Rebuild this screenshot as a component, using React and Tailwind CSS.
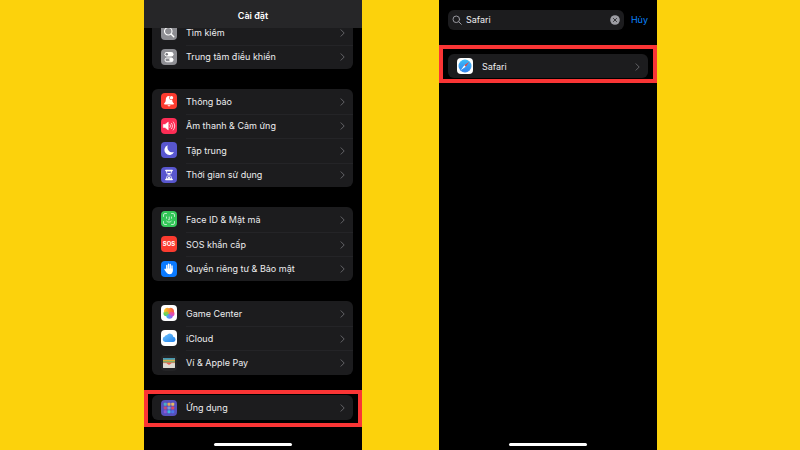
import { useState } from "react";

function SearchGlyph() {
  return (
    <svg viewBox="0 0 32 32" className="size-4 shrink-0 rounded bg-[#8e8e93]">
      <circle cx="14.5" cy="14.5" r="7.5" fill="none" stroke="#fff" strokeWidth="2.2" />
      <path d="M20 20l5.5 5.5" stroke="#fff" strokeWidth="2.8" strokeLinecap="round" />
    </svg>
  );
}

function ControlGlyph() {
  return (
    <svg viewBox="0 0 32 32" className="size-4 shrink-0 rounded bg-[#8e8e93]">
      <rect x="7" y="6" width="18" height="9" rx="4.5" fill="#fff" />
      <circle cx="11.5" cy="10.5" r="2.4" fill="#77777c" />
      <rect x="8" y="18" width="16" height="7.5" rx="3.7" fill="none" stroke="#fff" strokeWidth="2" />
      <circle cx="20.5" cy="21.7" r="4" fill="#fff" />
    </svg>
  );
}

function BellGlyph() {
  return (
    <svg viewBox="0 0 32 32" className="size-4 shrink-0 rounded bg-[#fb3b2f]">
      <path d="M16 6c-5 0-6.500 4-6.500 8 0 4-1.500 5-3 6.500-.8.900-.3 2.500 1 2.500h17c1.300 0 1.800-1.600 1-2.500-1.500-1.500-3-2.500-3-6.500 0-4-1.500-8-6.500-8z" fill="#fff" />
      <path d="M13 24.500h6c-.5 3-5.500 3-6 0z" fill="#fff" />
      <circle cx="21" cy="9.500" r="4.600" fill="#fb3b2f" />
      <circle cx="21" cy="9.500" r="3.400" fill="#fff" />
    </svg>
  );
}

function SpeakerGlyph() {
  return (
    <svg viewBox="0 0 32 32" className="size-4 shrink-0 rounded bg-[#fc2d55]">
      <path d="M4.500 13h3.500l6.500-5v16L8 19H4.500z" fill="#fff" stroke="#fff" strokeLinejoin="round" />
      <path d="M18 13c1.300 1.800 1.300 4.200 0 6M21 10.500c2.700 3.300 2.700 7.700 0 11M24.500 8c4 4.800 4 11.200 0 16" fill="none" stroke="#fff" strokeWidth="1.500" strokeLinecap="round" />
    </svg>
  );
}

function MoonGlyph() {
  return (
    <svg viewBox="0 0 32 32" className="size-4 shrink-0 rounded bg-[#5856ce]">
      <path d="M13.500 6.500a10 10 0 1 0 12.500 13.500C18 23 10.500 15.500 13.500 6.500z" fill="#fff" />
    </svg>
  );
}

function HourglassGlyph() {
  return (
    <svg viewBox="0 0 32 32" className="size-4 shrink-0 rounded bg-[#5856ce]">
      <path d="M9.500 7h13M9.500 25h13" stroke="#fff" strokeWidth="2.600" strokeLinecap="round" />
      <path d="M11 8c0 4.500 1.500 6 4 8-2.500 2-4 3.500-4 8h10c0-4.500-1.500-6-4-8 2.500-2 4-3.500 4-8z" fill="#5856ce" stroke="#fff" strokeWidth="1.800" />
      <path d="M12.500 12h7L16 16zM16 18l3.500 5.500h-7z" fill="#fff" />
    </svg>
  );
}

function FaceGlyph() {
  return (
    <svg viewBox="0 0 32 32" className="size-4 shrink-0 rounded bg-[#34c759]">
      <g fill="none" stroke="#e6faea" strokeWidth="1.500" strokeLinecap="round">
        <path d="M5 11V8a3 3 0 0 1 3-3h3M21 5h3a3 3 0 0 1 3 3v3M27 21v3a3 3 0 0 1-3 3h-3M11 27H8a3 3 0 0 1-3-3v-3" />
        <path d="M11 12v2.500M21 12v2.500M16.500 12v5.500h-1.500M11.500 20.500c2.500 2.500 6.500 2.500 9 0" />
      </g>
    </svg>
  );
}

function SosGlyph() {
  return (
    <span className="flex size-4 shrink-0 items-center justify-center rounded bg-[#fb3b2f] text-[6px] font-bold text-white">
      SOS
    </span>
  );
}

function HandGlyph() {
  return (
    <svg viewBox="0 0 32 32" className="size-4 shrink-0 rounded bg-[#0a7aff]">
      <g stroke="#fff" strokeWidth="2.700" strokeLinecap="round">
        <path d="M11.500 9v10M15 6.500v12M18.500 7v12M22 10v10" />
        <path d="M8 16.500l3.500 5" />
      </g>
      <path d="M10.200 15h13.100v5c0 4-2.300 6.500-6 6.500-3.500 0-5-1.500-7.100-5.500z" fill="#fff" />
    </svg>
  );
}

function GameGlyph() {
  return (
    <svg viewBox="0 0 32 32" className="size-4 shrink-0 rounded bg-white">
      <defs>
        <linearGradient id="game-top" x1="0" y1="0" x2="1" y2="0">
          <stop offset="0" stopColor="#fcd22a" />
          <stop offset="1" stopColor="#f4503f" />
        </linearGradient>
        <linearGradient id="game-bottom" x1="0" y1="0" x2="1" y2="0">
          <stop offset="0" stopColor="#35bdf0" />
          <stop offset="1" stopColor="#a653ea" />
        </linearGradient>
      </defs>
      <circle cx="21.500" cy="17.500" r="5.500" fill="#e94bb0" />
      <circle cx="10.500" cy="17" r="5.500" fill="#53d264" />
      <circle cx="17" cy="21" r="6.500" fill="url(#game-bottom)" />
      <path d="M6 12a6.500 6.500 0 0 1 10-5.500 6.500 6.500 0 0 1 10 5.500c0 4-3 6-6 6h-8c-3 0-6-2-6-6z" fill="url(#game-top)" />
      <circle cx="11" cy="17" r="4" fill="#6fd652" opacity=".8" />
      <circle cx="20.500" cy="17.500" r="4" fill="#e94bb0" opacity=".8" />
    </svg>
  );
}

function CloudGlyph() {
  return (
    <svg viewBox="0 0 32 32" className="size-4 shrink-0 rounded bg-white">
      <defs>
        <linearGradient id="cloud" x1="0" y1="0" x2="1" y2="1">
          <stop offset="0" stopColor="#72c3fa" />
          <stop offset="1" stopColor="#1f83ee" />
        </linearGradient>
      </defs>
      <path d="M8.500 24a5.500 5.500 0 0 1-1-10.800 4.200 4.200 0 0 1 4.300-3.200A7 7 0 0 1 24.500 13.500a5.300 5.300 0 0 1 0 10.500z" fill="url(#cloud)" />
    </svg>
  );
}

function WalletGlyph() {
  return (
    <svg viewBox="0 0 32 32" className="size-4 shrink-0 rounded bg-[#242426]">
      <rect x="4" y="6" width="24" height="20" rx="2" fill="#dedbd2" />
      <path d="M4 10V8a2 2 0 0 1 2-2h20a2 2 0 0 1 2 2v2z" fill="#4299b5" />
      <path d="M4 9.500h24v3.500H4z" fill="#d9a941" />
      <path d="M4 12.500h24v3H4z" fill="#66a558" />
      <path d="M4 15h24v2h-6c-2 0-2.500 3.500-6 3.500s-4-3.500-6-3.500H4z" fill="#ea6353" />
      <path d="M4 16.500h6.500c2 0 2.500 3 5.500 3s3.500-3 5.500-3H28V24a2 2 0 0 1-2 2H6a2 2 0 0 1-2-2z" fill="#dedbd2" />
    </svg>
  );
}

const TILES = [
  ["#4baec2", "#e8a756", "#e8bb63"],
  ["#c34a75", "#7d9ad4", "#de4864"],
  ["#8a56d8", "#3abbe1", "#4c77ea"],
];

function AppsGlyph() {
  return (
    <svg viewBox="0 0 32 32" className="size-4 shrink-0 rounded bg-[#5650bd]">
      {TILES.map((row, y) =>
        row.map((color, x) => (
          <rect key={`${x}-${y}`} x={5.5 + x * 7.5} y={5.5 + y * 7.5} width="6" height="6" rx="1.500" fill={color} />
        ))
      )}
    </svg>
  );
}

function SafariGlyph() {
  return (
    <svg viewBox="0 0 32 32" className="size-4 shrink-0 rounded bg-white">
      <defs>
        <linearGradient id="compass" x1="0" y1="0" x2="0" y2="1">
          <stop offset="0" stopColor="#3cbcf8" />
          <stop offset="1" stopColor="#2f80ee" />
        </linearGradient>
      </defs>
      <circle cx="16" cy="16" r="13" fill="url(#compass)" />
      <circle cx="16" cy="16" r="11.500" fill="none" stroke="#a9dcfb" strokeWidth="1" strokeDasharray="1 2" opacity=".6" />
      <path d="M24.500 7.500L17.300 17.300 14.700 14.700z" fill="#f0433c" />
      <path d="M7.500 24.500l7.200-9.800 2.600 2.600z" fill="#fff" />
    </svg>
  );
}

function Chevron() {
  return (
    <svg viewBox="0 0 5 8" className="h-2 w-[5px] shrink-0" fill="none" stroke="#636367" strokeLinecap="round" strokeLinejoin="round">
      <path d="M1 .8L4.200 4 1 7.200" />
    </svg>
  );
}

function Row({ Icon, label, divided }) {
  return (
    <a href="#" className="flex flex-1 items-center gap-[9px] pl-[9px]">
      <Icon />
      <span
        className={`flex flex-1 items-center justify-between self-stretch border-t pr-2 ${
          divided ? "border-[#242427]" : "border-transparent"
        }`}
      >
        {label}
        <Chevron />
      </span>
    </a>
  );
}

function Group({ rows, className }) {
  return (
    <div className={`flex flex-col rounded-md bg-[#1c1c1e] ${className}`}>
      {rows.map((row, i) => (
        <Row key={row.label} Icon={row.Icon} label={row.label} divided={i > 0} />
      ))}
    </div>
  );
}

function HomeBar() {
  return <div className="mx-auto mt-auto mb-1 h-[3px] w-[78px] shrink-0 rounded-full bg-white" />;
}

const general = [
  { Icon: SearchGlyph, label: "Tìm kiếm" },
  { Icon: ControlGlyph, label: "Trung tâm điều khiển" },
];

const alerts = [
  { Icon: BellGlyph, label: "Thông báo" },
  { Icon: SpeakerGlyph, label: "Âm thanh & Cảm ứng" },
  { Icon: MoonGlyph, label: "Tập trung" },
  { Icon: HourglassGlyph, label: "Thời gian sử dụng" },
];

const security = [
  { Icon: FaceGlyph, label: "Face ID & Mật mã" },
  { Icon: SosGlyph, label: "SOS khẩn cấp" },
  { Icon: HandGlyph, label: "Quyền riêng tư & Bảo mật" },
];

const services = [
  { Icon: GameGlyph, label: "Game Center" },
  { Icon: CloudGlyph, label: "iCloud" },
  { Icon: WalletGlyph, label: "Ví & Apple Pay" },
];

function SettingsScreen() {
  return (
    <section className="flex flex-col bg-black">
      <header className="sticky top-0 z-10 flex h-7 shrink-0 items-center justify-center bg-[#262628] pt-1">
        <h1 className="font-semibold text-white">Cài đặt</h1>
      </header>

      <div className="-mt-2 flex flex-col gap-5 pr-[9px] pl-2">
        <Group rows={general} className="h-[49px]" />
        <Group rows={alerts} className="h-[98px]" />
        <Group rows={security} className="h-[74px]" />
        <Group rows={services} className="h-[74px]" />
      </div>

      {/* Highlighted row */}
      <div className="mt-[15px] border-4 border-[#fa3535] pt-px pr-[5px] pb-[3px] pl-1">
        <Group rows={[{ Icon: AppsGlyph, label: "Ứng dụng" }]} className="h-[25px]" />
      </div>

      <HomeBar />
    </section>
  );
}

function SearchScreen() {
  const [query, setQuery] = useState("Safari");

  return (
    <section className="flex flex-col bg-black">
      <div className="flex items-center gap-[7px] px-[9px] pt-[10px]">
        <div className="flex h-5 min-w-0 flex-1 items-center gap-1 rounded-md bg-[#1c1c1e] px-1">
          <svg viewBox="0 0 10 10" className="size-[10px] shrink-0" fill="none" stroke="#98989e" strokeLinecap="round">
            <circle cx="4.300" cy="4.300" r="3.300" />
            <path d="M6.800 6.800L9.300 9.300" />
          </svg>
          <input
            type="text"
            aria-label="Tìm kiếm"
            value={query}
            onChange={(e) => setQuery(e.target.value)}
            className="min-w-0 flex-1 bg-transparent text-[#ececee] outline-none"
          />
          <button type="button" aria-label="Xóa" onClick={() => setQuery("")}>
            <svg viewBox="0 0 10 10" className="size-[10px]">
              <circle cx="5" cy="5" r="4.800" fill="#9c9ca2" />
              <path d="M3.400 3.400l3.200 3.200M6.600 3.400L3.400 6.600" stroke="#1c1c1e" strokeWidth=".8" strokeLinecap="round" />
            </svg>
          </button>
        </div>
        <button type="button" className="text-[#0a84ff]">
          Hủy
        </button>
      </div>

      {/* Highlighted result */}
      <div className="mt-[15px] border-4 border-[#fa3535] px-[5px] pt-[5px] pb-px">
        <Group rows={[{ Icon: SafariGlyph, label: "Safari" }]} className="h-6" />
      </div>

      <HomeBar />
    </section>
  );
}

function App() {
  return (
    <main className="grid min-h-screen grid-cols-2 gap-[77px] bg-[#fcd20c] pr-[143px] pl-36 font-['Inter','Noto_Sans',sans-serif] text-[9px] leading-3 text-[#ececee]">
      <SettingsScreen />
      <SearchScreen />
    </main>
  );
}

export default App;
